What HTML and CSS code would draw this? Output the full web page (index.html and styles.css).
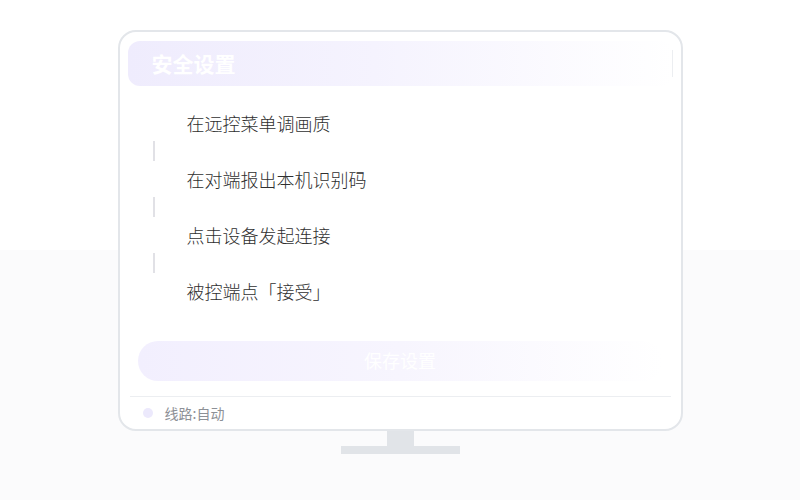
FILE: index.html
```html
<!DOCTYPE html>
<html lang="zh-CN">
<head>
<meta charset="utf-8">
<title>安全设置</title>
<link rel="stylesheet" href="styles.css">
</head>
<body>
<div class="stage">
  <div class="monitor">
    <div class="header">
      <span class="title">安全设置</span>
      <span class="header-edge"></span>
    </div>
    <div class="steps">
      <div class="step">在远控菜单调画质</div>
      <div class="connector"></div>
      <div class="step">在对端报出本机识别码</div>
      <div class="connector"></div>
      <div class="step">点击设备发起连接</div>
      <div class="connector"></div>
      <div class="step">被控端点「接受」</div>
    </div>
    <div class="save">保存设置</div>
    <div class="divider"></div>
    <div class="footer">
      <span class="dot"></span>
      <span class="route">线路:自动</span>
    </div>
  </div>
  <div class="neck"></div>
  <div class="base"></div>
</div>
</body>
</html>
```
FILE: styles.css
```css
html, body {
  margin: 0;
  padding: 0;
  font-family: "Noto Sans CJK SC", "Noto Sans", sans-serif;
}
body {
  background: linear-gradient(to bottom, #ffffff 0, #ffffff 250px, #fbfbfc 250px, #fbfbfc 100%);
  min-height: 500px;
}
.stage {
  display: flex;
  flex-direction: column;
  align-items: center;
  padding-top: 30px;
  height: 470px;
}
.monitor {
  width: 561px;
  height: 397px;
  border: 2px solid #e3e6ea;
  border-radius: 18px;
  background: #ffffff;
  display: flex;
  flex-direction: column;
}
.header {
  margin: 9px 8px 0 8px;
  height: 45px;
  border-radius: 12px;
  background: linear-gradient(to right, #efecfd 0%, #f5f3fe 45%, rgba(255,255,255,0.9) 100%);
  display: flex;
  align-items: center;
  justify-content: space-between;
  padding-left: 24px;
}
.title {
  color: #ffffff;
  font-size: 21px;
  font-weight: 700;
  line-height: 1;
}
.header-edge {
  width: 1px;
  height: 27px;
  background: #eceef1;
}
.steps {
  margin-top: 27px;
  display: flex;
  flex-direction: column;
}
.step {
  height: 20px;
  line-height: 20px;
  padding-left: 67px;
  font-size: 18px;
  font-weight: 300;
  color: #2f2f2f;
}
.connector {
  margin: 8px 0 8px 33px;
  width: 2px;
  height: 20px;
  background: #e1e1e6;
}
.save {
  margin: 40px 18px 0 18px;
  height: 40px;
  border-radius: 20px;
  background: linear-gradient(to right, #f2effe 0%, #f7f5fe 50%, rgba(255,255,255,0.9) 100%);
  color: #ffffff;
  font-size: 18px;
  line-height: 38px;
  text-align: center;
}
.divider {
  margin: 15px 10px 0 10px;
  height: 1px;
  background: #eceef1;
}
.footer {
  flex: 1;
  display: flex;
  align-items: center;
  padding-left: 23px;
  gap: 12px;
}
.dot {
  width: 10px;
  height: 10px;
  border-radius: 50%;
  background: #ece9fc;
}
.route {
  font-size: 14px;
  color: #8d9096;
}
.neck {
  width: 27px;
  height: 15px;
  background: #e1e4e8;
}
.base {
  width: 119px;
  height: 8px;
  background: #e1e4e8;
}
```
